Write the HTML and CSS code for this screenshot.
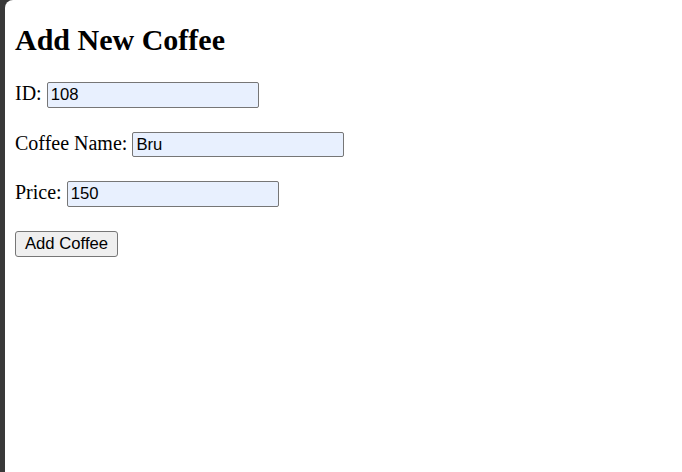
FILE: index.html
```html
<!DOCTYPE html>
<html lang="en">
<head>
<meta charset="utf-8">
<title>Add New Coffee</title>
<link rel="stylesheet" href="styles.css">
</head>
<body>
<div class="page">
  <h1 class="title">Add New Coffee</h1>
  <form class="form">
    <div class="row"><label class="label" for="id">ID:</label><input class="field" id="id" type="text" value="108"></div>
    <div class="row"><label class="label" for="name">Coffee Name:</label><input class="field" id="name" type="text" value="Bru"></div>
    <div class="row"><label class="label" for="price">Price:</label><input class="field" id="price" type="text" value="150"></div>
    <div class="row"><button class="btn" type="button">Add Coffee</button></div>
  </form>
</div>
</body>
</html>
```
FILE: styles.css
```css
html, body {
  margin: 0;
  padding: 0;
  height: 100%;
}
body {
  background: #393939;
  font-family: "Liberation Serif", "Times New Roman", serif;
  font-size: 20px;
  color: #000;
}
.page {
  margin-left: 5px;
  height: 100%;
  box-sizing: border-box;
  background: #fff;
  border-top-left-radius: 8px;
  padding: 23px 0 0 10px;
}
.title {
  margin: 0;
  font-size: 30px;
  font-weight: bold;
}
.form {
  margin-top: 25px;
  display: flex;
  flex-direction: column;
  gap: 24px;
}
.row {
  display: flex;
  align-items: baseline;
  gap: 5px;
  height: 25.5px;
}
.field {
  box-sizing: border-box;
  width: 212px;
  height: 25.5px;
  margin: 0;
  padding: 2px 3px;
  border: 1px solid #767676;
  border-radius: 2px;
  background: #e8f0fe;
  font-family: "Liberation Sans", Arial, sans-serif;
  font-size: 16.67px;
  color: #000;
}
.btn {
  box-sizing: border-box;
  height: 26px;
  margin: 0;
  padding: 1px 9px;
  border: 1px solid #767676;
  border-radius: 3px;
  background: #efefef;
  font-family: "Liberation Sans", Arial, sans-serif;
  font-size: 16.67px;
  color: #000;
}
```
